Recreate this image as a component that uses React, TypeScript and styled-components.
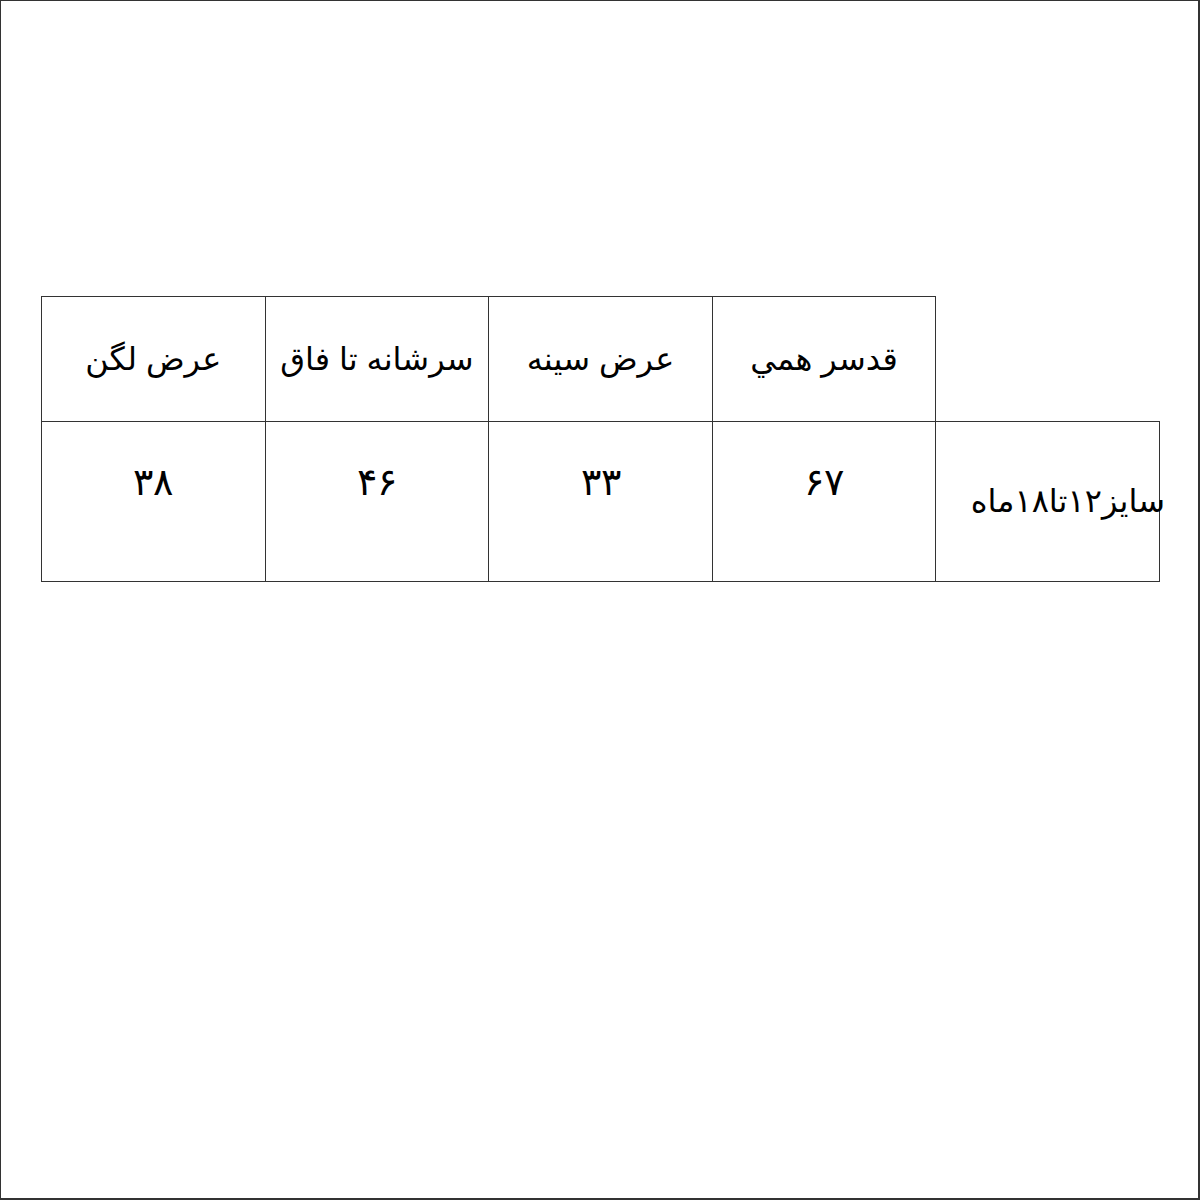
import React from "react";
import styled, { createGlobalStyle } from "styled-components";

const Global = createGlobalStyle`
  html, body { margin: 0; padding: 0; background: #fff; }
  body { font-family: "Liberation Sans", "DejaVu Sans", sans-serif; }
`;

const Page = styled.div`
  box-sizing: border-box;
  width: 1200px;
  height: 1200px;
  border: 1px solid #333;
  border-width: 1px 2px 2px 1px;
  padding: 295px 0 0 40px;
  background: #fff;
`;

const Table = styled.table`
  border-collapse: collapse;
  table-layout: fixed;
  width: 1119px;
  direction: rtl;
  color: #000;
`;

const HeadRow = styled.tr`
  height: 125px;
`;

const BodyRow = styled.tr`
  height: 160px;
`;

const HeadCell = styled.td<{ $empty?: boolean }>`
  border: ${(p) => (p.$empty ? "none" : "1px solid #333")};
  padding: 0;
  text-align: center;
  vertical-align: middle;
  font-size: 32px;
  line-height: 1.2;
`;

const ValueCell = styled.td`
  border: 1px solid #333;
  padding: 40px 0 0;
  text-align: center;
  vertical-align: top;
  font-size: 38px;
  line-height: 1.1;
  font-family: "DejaVu Serif", "Liberation Serif", serif;
`;

const SizeCell = styled.td`
  border: 1px solid #333;
  padding: 0;
  text-align: right;
  vertical-align: middle;
  font-size: 32px;
  line-height: 1.2;
  white-space: nowrap;
`;

const SizeLabel = styled.span`
  display: inline-block;
  margin-right: -6px;
`;

const headers = ["قدسر همي", "عرض سينه", "سرشانه تا فاق", "عرض لگن"];
const values = ["۶۷", "۳۳", "۴۶", "۳۸"];

export default function App() {
  return (
    <>
      <Global />
      <Page>
        <Table>
          <tbody>
            <HeadRow>
              <HeadCell $empty />
              {headers.map((h) => (
                <HeadCell key={h}>{h}</HeadCell>
              ))}
            </HeadRow>
            <BodyRow>
              <SizeCell>
                <SizeLabel>سايز۱۲تا۱۸ماه</SizeLabel>
              </SizeCell>
              {values.map((v) => (
                <ValueCell key={v}>
                  <span dir="ltr">{v}</span>
                </ValueCell>
              ))}
            </BodyRow>
          </tbody>
        </Table>
      </Page>
    </>
  );
}
